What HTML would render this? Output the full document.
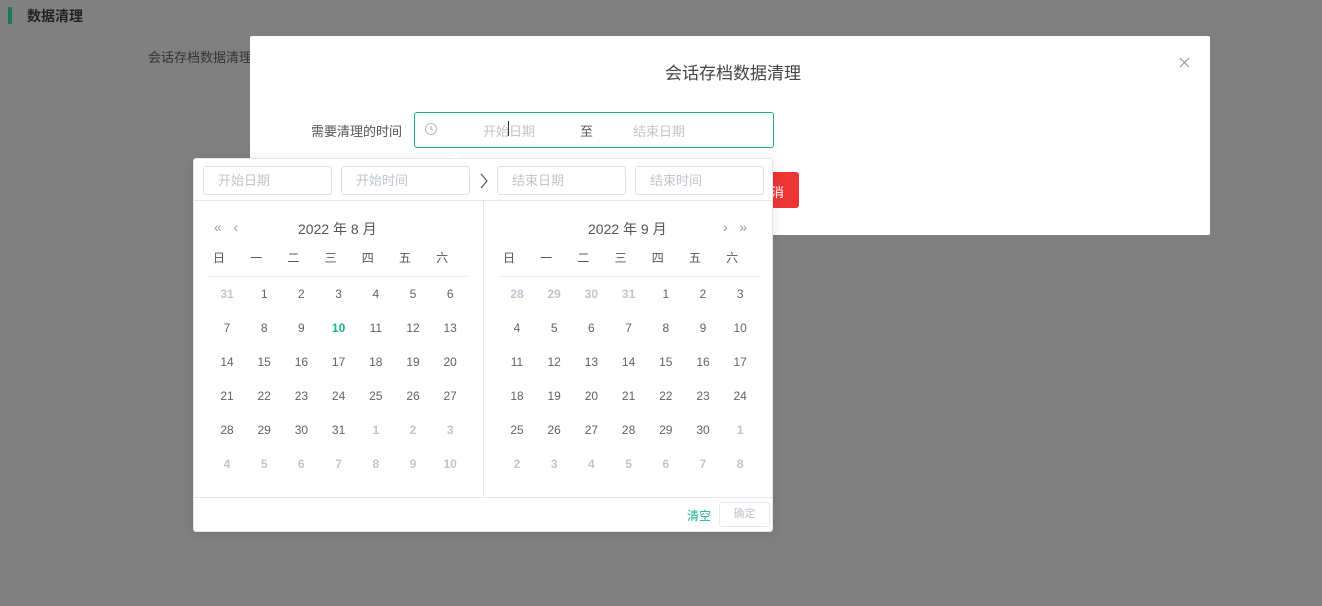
<!DOCTYPE html>
<html><head><meta charset="utf-8"><style>
*{margin:0;padding:0;box-sizing:border-box}
body{width:1322px;height:606px;background:#808080;font-family:"Liberation Sans","Noto Sans CJK SC",sans-serif;position:relative;overflow:hidden}
.a{position:absolute;white-space:nowrap}
.c{position:absolute;width:30px;text-align:center;font-size:12px;transform:translateX(-15px);line-height:14px}
.inp{position:absolute;top:166px;width:129px;height:29px;border:1px solid #dcdfe6;border-radius:3px;font-size:13px;color:#c0c4cc;padding-left:14px;line-height:27px}
</style></head><body>
<div class="a" style="left:8px;top:7px;width:4px;height:17px;background:#1a7a5e"></div>
<div class="a" style="left:27px;top:6px;font-size:14px;font-weight:bold;color:#222">数据清理</div>
<div class="a" style="left:148px;top:47px;font-size:13px;color:#333">会话存档数据清理</div>
<div class="a" style="left:250px;top:36px;width:960px;height:199px;background:#fff;border-radius:2px"></div>
<div class="a" style="left:665px;top:59px;font-size:17px;color:#444">会话存档数据清理</div>
<svg class="a" style="left:1179px;top:57px" width="11" height="11"><path d="M1 1L10 10M10 1L1 10" stroke="#999" stroke-width="1.2"/></svg>
<div class="a" style="left:311px;top:121px;font-size:13px;color:#555">需要清理的时间</div>
<div class="a" style="left:414px;top:112px;width:360px;height:36px;border:1px solid #1fb08a;border-radius:3px"></div>
<svg class="a" style="left:424px;top:122px" width="14" height="14"><circle cx="7" cy="7" r="5.5" fill="none" stroke="#bbb" stroke-width="1.1"/><path d="M7 4V7.5H9.5" fill="none" stroke="#bbb" stroke-width="1.1"/></svg>
<div class="a" style="left:483px;top:121px;font-size:13px;color:#c0c4cc">开始日期</div>
<div class="a" style="left:508px;top:121px;width:1px;height:15px;background:#333"></div>
<div class="a" style="left:580px;top:121px;font-size:13px;color:#555">至</div>
<div class="a" style="left:633px;top:121px;font-size:13px;color:#c0c4cc">结束日期</div>
<div class="a" style="left:760px;top:172px;width:39px;height:36px;background:#ee3535;border-radius:3px;color:#fff;font-size:13px;padding-top:10px;text-indent:-2px;overflow:hidden">取消</div>
<div class="a" style="left:193px;top:158px;width:580px;height:374px;background:#fff;border:1px solid #e4e7ed;border-radius:3px;box-shadow:0 2px 12px rgba(0,0,0,.1)"></div>
<div class="a" style="left:448px;top:151px;width:0;height:0;border-left:7px solid transparent;border-right:7px solid transparent;border-bottom:7px solid #fff"></div>
<div class="inp" style="left:203px">开始日期</div>
<div class="inp" style="left:341px">开始时间</div>
<div class="inp" style="left:497px">结束日期</div>
<div class="inp" style="left:635px">结束时间</div>
<svg class="a" style="left:479px;top:173px" width="10" height="16"><path d="M2 1L8 8L2 15" fill="none" stroke="#555" stroke-width="1.2"/></svg>
<div class="a" style="left:194px;top:200px;width:578px;height:1px;background:#e4e7ed"></div>
<div class="a" style="left:483px;top:201px;width:1px;height:296px;background:#e4e7ed"></div>
<div class="a" style="left:194px;top:497px;width:578px;height:1px;background:#e4e7ed"></div>
<div class="a" style="left:214px;top:219px;font-size:14px;color:#999">«&nbsp;&nbsp;&nbsp;‹</div>
<div class="a" style="left:298px;top:219px;font-size:14px;color:#555">2022 年 8 月</div>
<div class="a" style="left:588px;top:219px;font-size:14px;color:#555">2022 年 9 月</div>
<div class="a" style="left:723px;top:219px;font-size:14px;color:#999">›&nbsp;&nbsp;&nbsp;»</div>
<div class="a" style="left:208px;top:276px;width:260px;height:1px;background:#ebeef5"></div>
<div class="a" style="left:498px;top:276px;width:262px;height:1px;background:#ebeef5"></div>
<div class="a" style="left:687px;top:507px;font-size:12px;color:#1fb08a">清空</div>
<div class="a" style="left:719px;top:502px;width:51px;height:25px;border:1px solid #e4e7ed;border-radius:3px;font-size:11px;color:#c0c4cc;text-align:center;line-height:23px">确定</div>
<div id="g"></div>
<script>
var g=document.getElementById('g'),h='';
var wd=['日','一','二','三','四','五','六'];
function cal(x0,days){
 for(var i=0;i<7;i++)h+='<div class="c" style="left:'+(x0-8+37.2*i)+'px;top:251px;color:#555">'+wd[i]+'</div>';
 days.forEach(function(d,k){var r=Math.floor(k/7),c=k%7;
  var col=d[1]==0?'#606266':(d[1]==2?'#1fb08a':'#c0c4cc');var fw=(d[1]!=0)?'bold':'normal';
  h+='<div class="c" style="left:'+(x0+37.2*c)+'px;top:'+(287+34*r)+'px;color:'+col+';font-weight:'+fw+'">'+d[0]+'</div>';});
}
var a=[[31,1]];for(var i=1;i<=31;i++)a.push([i,i==10?2:0]);for(i=1;i<=10;i++)a.push([i,1]);
var b=[[28,1],[29,1],[30,1],[31,1]];for(i=1;i<=30;i++)b.push([i,0]);for(i=1;i<=8;i++)b.push([i,1]);
cal(227,a);cal(517,b);g.innerHTML=h;
</script>
</body></html>
